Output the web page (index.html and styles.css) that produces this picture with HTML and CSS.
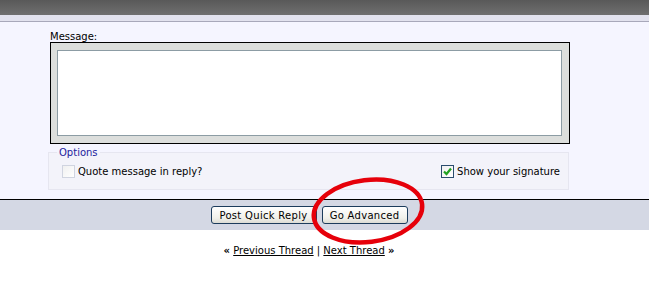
FILE: index.html
```html
<!DOCTYPE html>
<html>
<head>
    <title>Quick Reply</title>
    <link rel="stylesheet" href="styles.css">
</head>
<body>
    <div class="topbar"></div>
    <div class="strip"></div>

    <div class="panel">
        <div class="qr-box">
            <div class="qr-label">Message:</div>
            <div class="editor">
                <textarea class="qr-text"></textarea>
            </div>
            <fieldset class="options">
                <legend>Options</legend>
                <div class="opt-row">
                    <label class="opt"><span class="cb"></span>Quote message in reply?</label>
                    <label class="opt"><span class="cb checked">
                        <svg width="11" height="11" viewBox="0 0 11 11"><path d="M2 5.5 L4.5 8 L9 2.5" fill="none" stroke="#21a121" stroke-width="2.2"/></svg>
                    </span>Show your signature</label>
                </div>
            </fieldset>
        </div>
    </div>

    <div class="btnbar">
        <button class="btn btn-post">Post Quick Reply</button>
        <button class="btn btn-adv">Go Advanced</button>
    </div>

    <div class="threadnav">
        <b>&laquo;</b> <a href="#">Previous Thread</a> | <a href="#">Next Thread</a> <b>&raquo;</b>
    </div>

    <!-- red circle drawn over the Go Advanced button -->
    <svg class="mark" width="124" height="76" viewBox="0 0 124 76">
        <ellipse cx="62" cy="37" rx="54.5" ry="31" transform="rotate(-7 62 37)" fill="none" stroke="#e6000a" stroke-width="4.5"/>
    </svg>
</body>
</html>
```

FILE: styles.css
```css
body {
    margin: 0;
    padding: 0;
    background: #fff;
    font-family: 'DejaVu Sans', Verdana, sans-serif;
    font-size: 10px;
    color: #000;
    position: relative;
}

.topbar {
    height: 15px;
    background: linear-gradient(#595959, #6f6f6f);
}

.strip {
    height: 6px;
    background: #e2e2ee;
    border-bottom: 1px solid #a8a8ba;
}

.panel {
    background: #f5f5ff;
    padding: 9px 0 9px 0;
    border-bottom: 1px solid #000;
}

.qr-box {
    margin-left: 50px;
    width: 520px;
}

.qr-label {
    line-height: 11px;
    height: 11px;
}

.editor {
    border: 1px solid #000;
    background: #dcdedc;
    padding: 7px 7px 7px 6px;
}

.qr-text {
    display: block;
    box-sizing: border-box;
    width: 100%;
    height: 86px;
    margin: 0;
    border: 1px solid #8c9ca4;
    background: #fff;
    resize: none;
}

.options {
    margin: 3px 0 0 -2px;
    padding: 0 8px 10px 8px;
    border: 1px solid #e6e6f0;
    background: #f3f3fa;
    width: 503px;
}

.options legend {
    padding: 0 2px;
    color: #22229c;
    line-height: 11px;
}

.opt-row {
    display: flex;
    justify-content: space-between;
    padding: 7px 0 1px 5px;
}

.opt {
    display: flex;
    align-items: center;
    height: 13px;
}

.cb {
    box-sizing: border-box;
    width: 13px;
    height: 13px;
    margin-right: 3px;
    border: 1px solid #d0d4e0;
    background: linear-gradient(135deg, #f0f0f0, #fff);
    display: flex;
    align-items: center;
    justify-content: center;
}

.cb.checked {
    border-color: #2a4c6e;
}

.btnbar {
    background: #d4d8e4;
    padding: 6px 31px 6px 0;
    display: flex;
    justify-content: center;
    gap: 5px;
}

.btn {
    height: 18px;
    padding: 0;
    font-family: 'DejaVu Sans', Verdana, sans-serif;
    font-size: 10px;
    letter-spacing: 0.3px;
    color: #000;
    background: linear-gradient(#ffffff, #f0f0ea 70%, #dcdcd4);
    border: 1px solid #1c3c5c;
    border-radius: 3px;
}

.btn-post {
    width: 106px;
}

.btn-adv {
    width: 86px;
}

.threadnav {
    margin-top: 15px;
    padding-right: 31px;
    text-align: center;
    line-height: 12px;
}

.threadnav a {
    color: #000;
    text-decoration: underline;
}

.mark {
    position: absolute;
    left: 306px;
    top: 174px;
}
```
